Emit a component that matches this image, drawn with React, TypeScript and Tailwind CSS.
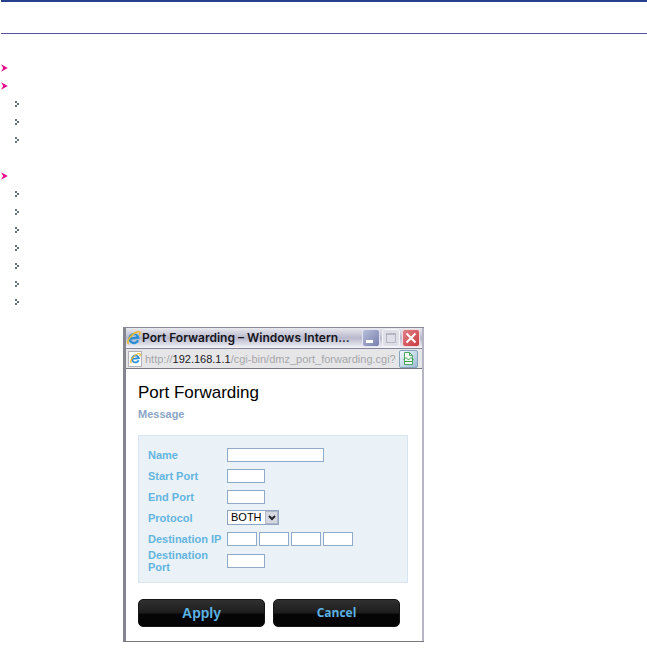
import type { ReactNode } from "react";

const fieldClass = "block h-[14px] border border-[#8fabc9] bg-white px-0.5 text-[10px] outline-none";

function PinkArrow() {
  return (
    <svg width="7" height="8" viewBox="0 0 7 8" aria-hidden="true">
      <path d="M0 0.2 L6.8 4 L0 7.8 L2.2 4 Z" fill="#e5088a" />
    </svg>
  );
}

function DottedArrow() {
  return (
    <svg width="4" height="6" viewBox="0 0 4 6" shapeRendering="crispEdges" aria-hidden="true">
      <path d="M0 0h2v2H0z M2 2h2v2H2z M0 4h2v2H0z" fill="#66727c" />
    </svg>
  );
}

function MainItem({ children }: { children?: ReactNode }) {
  return (
    <li>
      <div className="flex h-[18px] items-center">
        <PinkArrow />
      </div>
      {children}
    </li>
  );
}

function SubList({ count }: { count: number }) {
  return (
    <ul className="pl-[14px]">
      {Array.from({ length: count }, (_, i) => (
        <li key={i} className="flex h-[18px] items-center">
          <DottedArrow />
        </li>
      ))}
    </ul>
  );
}

function ExplorerIcon({ size }: { size: number }) {
  return (
    <svg width={size} height={size} viewBox="0 0 14 14" fill="none" className="shrink-0" aria-hidden="true">
      <path d="M11 9.2 A4.4 4.4 0 1 1 11.2 6.6 L3.5 7.5" stroke="#2e8fd5" strokeWidth="2.4" />
      <path d="M5 4.6 Q7 3.2 9 4.6" stroke="#8bd0f5" strokeWidth="0.8" />
      <path d="M1.8 13 C-1.8 10.8 5 2.5 10 1 C13.5 0 13.8 2 12.2 4.3" stroke="#eeb82c" strokeWidth="1.5" />
    </svg>
  );
}

function TitleBar() {
  return (
    <header className="flex h-[21px] items-center border-b border-[#85859a] bg-linear-to-b from-[#e9e9ef] via-[#b8b8cc] to-[#f4f4f8] pl-px pr-0.5">
      <ExplorerIcon size={14} />
      <h1 className="min-w-0 flex-1 pl-px font-[Inter,Arial,sans-serif] text-[12px] leading-[20px] font-semibold whitespace-nowrap text-[#15151b]">
        Port Forwarding – Windows Intern...
      </h1>
      <div className="flex gap-0.5">
        <button type="button" aria-label="Minimize" className="flex h-[18px] w-[18px] items-end justify-start rounded-[3px] border border-[#e3e5f3] bg-linear-to-br from-[#b8bedb] to-[#7880ac] pb-[3px] pl-[3px]">
          <span className="h-[3px] w-[7px] bg-white" />
        </button>
        <button type="button" aria-label="Maximize" disabled className="flex h-[18px] w-[18px] items-center justify-center rounded-[3px] border border-[#f6f6fa] bg-[#dedee7]">
          <span className="h-[10px] w-[10px] border border-t-2 border-[#b4b4c4]" />
        </button>
        <button type="button" aria-label="Close" className="flex h-[18px] w-[18px] items-center justify-center rounded-[3px] border border-[#f2dce0] bg-linear-to-br from-[#e08088] to-[#c93541]">
          <svg width="12" height="12" viewBox="0 0 12 12" aria-hidden="true">
            <path d="M1.5 1.5 L10.5 10.5 M10.5 1.5 L1.5 10.5" stroke="white" strokeWidth="2" />
          </svg>
        </button>
      </div>
    </header>
  );
}

function AddressBar() {
  return (
    <div className="flex h-[20px] items-center border-b border-[#777781] bg-[#e6e6e9] pl-0.5 pr-1">
      <span className="flex h-4 w-[14px] shrink-0 items-center justify-center border border-[#b2b2b8] bg-white">
        <ExplorerIcon size={11} />
      </span>
      <p className="min-w-0 flex-1 pl-[3px] font-['Liberation_Sans',Arial,sans-serif] text-[11px] leading-[18px] whitespace-nowrap text-[#a6a6aa]">
        http://<span className="text-[#202024]">192.168.1.1</span>/cgi-bin/dmz_port_forwarding.cgi?
      </p>
      <button type="button" aria-label="Compatibility view" className="flex h-[18px] w-[19px] shrink-0 items-center justify-center rounded-[2px] border border-[#84a5bb] bg-linear-to-br from-[#f4faff] to-[#9cbbd3]">
        <svg width="11" height="13" viewBox="0 0 11 13" fill="none" aria-hidden="true">
          <path d="M1.5 0.5h5l3 3v9h-8z" fill="#f3fbf4" stroke="#4ba764" />
          <path d="M6.5 0.5v3h3" stroke="#4ba764" />
          <path d="M0.5 8 L3 5.5 L5.5 8 L8 5.5 L10.5 8 M2 9.5 H9" stroke="#3d9d55" />
        </svg>
      </button>
    </div>
  );
}

function Row({ label, htmlFor, children }: { label: string; htmlFor: string; children: ReactNode }) {
  return (
    <div className="flex min-h-[21px] items-center">
      <label htmlFor={htmlFor} className="w-[79px] shrink-0 text-[11px] leading-[12px] font-bold text-[#63b5df]">
        {label}
      </label>
      {children}
    </div>
  );
}

const actionClass =
  "h-[28px] flex-1 rounded-[5px] border border-[#151515] bg-linear-to-b from-[#303030] from-0% via-[#1d1d1d] via-50% to-[#050505] to-55% text-[#5bb2e3]";

function PortForwardingForm() {
  return (
    <form className="pt-[14px] pr-[14px] pb-[14px] pl-3 font-['Liberation_Sans',Arial,sans-serif]" onSubmit={(e) => e.preventDefault()}>
      <h2 className="text-[17px] leading-[20px] text-black">Port Forwarding</h2>
      <p className="mt-1 text-[11px] leading-[14px] font-bold text-[#8aa5c6]">Message</p>

      <div className="mt-[14px] border border-[#d9e6f2] bg-[#eaf1f7] pt-2 pr-2 pb-[9px] pl-[9px]">
        <Row label="Name" htmlFor="name">
          <input id="name" type="text" className={`${fieldClass} w-[97px]`} />
        </Row>
        <Row label="Start Port" htmlFor="start-port">
          <input id="start-port" type="text" className={`${fieldClass} w-[38px]`} />
        </Row>
        <Row label="End Port" htmlFor="end-port">
          <input id="end-port" type="text" className={`${fieldClass} w-[38px]`} />
        </Row>
        <Row label="Protocol" htmlFor="protocol">
          <div className="relative w-[52px]">
            <select id="protocol" className="block h-[15px] w-full appearance-none border border-[#8fa5c4] bg-white pl-[3px] text-[11px] leading-[13px] text-black outline-none">
              <option>BOTH</option>
              <option>TCP</option>
              <option>UDP</option>
            </select>
            <span className="pointer-events-none absolute inset-y-px right-px flex w-[13px] items-center justify-center border border-[#b1b8c8] bg-[#d5d8e0]">
              <svg width="8" height="6" viewBox="0 0 8 6" fill="none" aria-hidden="true">
                <path d="M1 1 L4 4 L7 1" stroke="#22242a" strokeWidth="2" />
              </svg>
            </span>
          </div>
        </Row>
        <Row label="Destination IP" htmlFor="ip-1">
          <div className="flex gap-0.5">
            {[1, 2, 3, 4].map((n) => (
              <input key={n} id={`ip-${n}`} aria-label={`Destination IP part ${n}`} type="text" className={`${fieldClass} w-[30px]`} />
            ))}
          </div>
        </Row>
        <Row label="Destination Port" htmlFor="destination-port">
          <input id="destination-port" type="text" className={`${fieldClass} w-[38px]`} />
        </Row>
      </div>

      <div className="mt-4 mr-2 flex gap-2">
        <button type="submit" className={`${actionClass} text-[14px] font-bold`}>
          Apply
        </button>
        <button type="button" className={`${actionClass} font-['Open_Sans',sans-serif] text-[12px] font-bold`}>
          Cancel
        </button>
      </div>
    </form>
  );
}

export default function App() {
  return (
    <main className="bg-white pb-[9px] pl-px">
      <div className="h-[34px] border-t-2 border-b border-t-[#27408b] border-b-[#5252a0]" />
      <ul className="pt-[25px]">
        <MainItem />
        <MainItem>
          <SubList count={3} />
        </MainItem>
        <li className="h-[18px]" aria-hidden="true" />
        <MainItem>
          <SubList count={7} />
        </MainItem>
      </ul>
      <section className="mt-4 ml-[122px] w-full max-w-[301px] border-y border-t-[#888896] border-b-[#777780]">
        <div className="border-r-2 border-l-3 border-r-[#b5b5c4] border-l-[#858590]">
          <TitleBar />
          <AddressBar />
          <PortForwardingForm />
        </div>
      </section>
    </main>
  );
}
